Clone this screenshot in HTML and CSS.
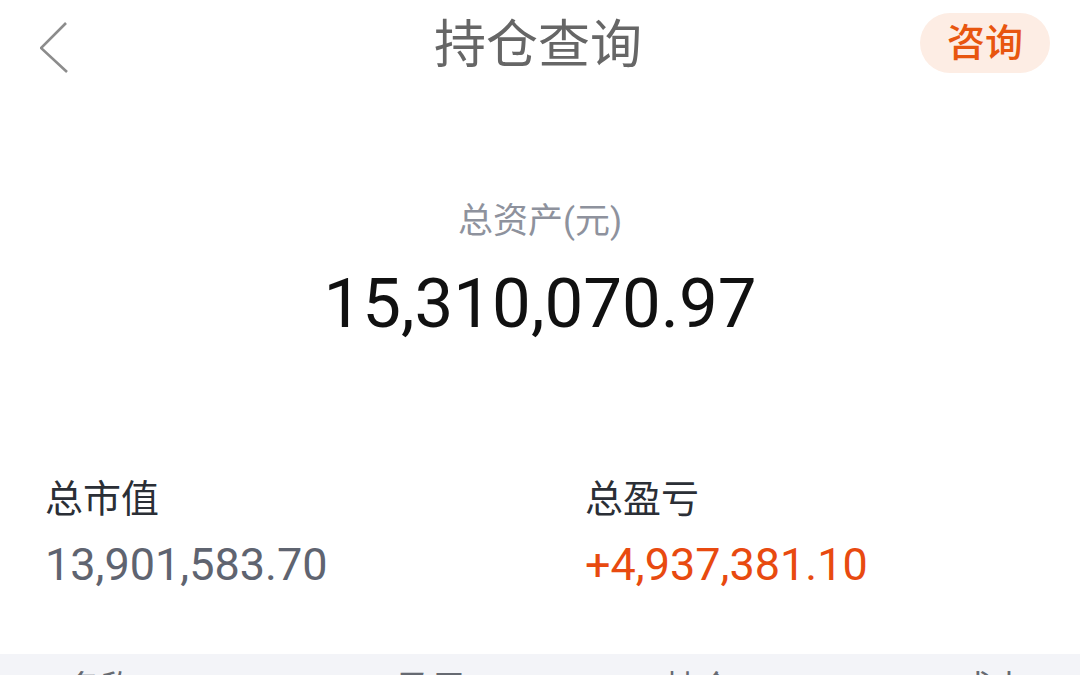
FILE: index.html
```html
<!DOCTYPE html>
<html lang="zh-CN">
  <head>
    <meta charset="UTF-8" />
    <meta name="viewport" content="width=device-width, initial-scale=1.0" />
    <link rel="stylesheet" href="styles.css">
  </head>

  <body>
    <!-- top bar: back arrow, title, consult button -->
    <div class="topbar">
      <div class="back">
        <svg width="40" height="60" viewBox="0 0 40 60">
          <polyline points="26,7 1,32 27,56" fill="none" stroke="#8c8c8c" stroke-width="2.6" />
        </svg>
      </div>
      <div class="title">持仓查询</div>
      <div class="consult">咨询</div>
    </div>

    <!-- total assets -->
    <div class="summary">
      <div class="summary-label">总资产(元)</div>
      <div class="summary-value">15,310,070.97</div>
    </div>

    <div class="stats">
      <div class="stat">
        <div class="stat-label">总市值</div>
        <div class="stat-value">13,901,583.70</div>
      </div>
      <div class="stat">
        <div class="stat-label">总盈亏</div>
        <div class="stat-value up">+4,937,381.10</div>
      </div>
    </div>

    <!-- holdings table header, cut off by the bottom of the screen -->
    <div class="table-head">
      <div>名称</div>
      <div>盈亏</div>
      <div>持仓</div>
      <div>成本</div>
    </div>
  </body>
</html>
```

FILE: styles.css
```css
body {
  margin: 0;
  background: #ffffff;
  font-family: Roboto, "Noto Sans CJK SC", sans-serif;
  overflow: hidden;
}

.topbar {
  height: 90px;
  display: grid;
  grid-template-columns: 1fr auto 1fr;
  align-items: center;
  padding: 0 30px 0 40px;
}
.back {
  width: 40px;
  height: 60px;
  margin-top: 2px;
}
.back svg {
  display: block;
}
.title {
  font-size: 52px;
  line-height: 60px;
  color: #666666;
  margin-left: -14px;
  margin-top: 2px;
}
.consult {
  justify-self: end;
  width: 130px;
  height: 60px;
  border-radius: 30px;
  background: #fdede4;
  color: #e8560f;
  font-size: 38px;
  font-weight: 500;
  line-height: 60px;
  text-align: center;
  margin-top: -4px;
}

.summary {
  margin-top: 111px;
  text-align: center;
}
.summary-label {
  font-size: 35px;
  line-height: 42px;
  color: #8e929d;
}
.summary-value {
  margin-top: 21px;
  font-size: 69px;
  line-height: 80px;
  color: #111111;
}

.stats {
  margin-top: 133px;
  display: grid;
  grid-template-columns: 1fr 1fr;
}
.stat {
  padding-left: 45px;
}
.stat-label {
  font-size: 38px;
  line-height: 44px;
  color: #2b2f36;
}
.stat-value {
  margin-top: 16px;
  font-size: 45px;
  line-height: 56px;
  color: #5f6470;
}
.stat-value.up {
  color: #e84a10;
}

.table-head {
  margin-top: 61px;
  background: #f3f4f8;
  display: grid;
  grid-template-columns: 331px 267px 293px 1fr;
  padding: 12px 0 20px 67px;
  font-size: 34px;
  line-height: 44px;
  color: #666a72;
}
```
